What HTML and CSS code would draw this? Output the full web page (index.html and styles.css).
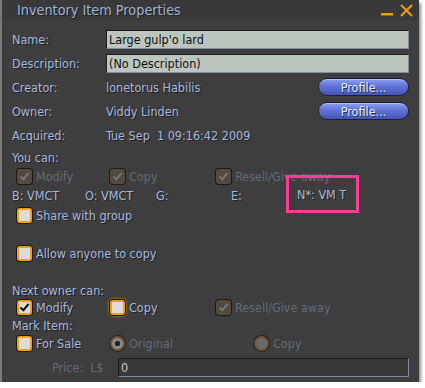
FILE: index.html
```html
<!DOCTYPE html>
<html lang="en">
<head>
  <meta charset="UTF-8">
  <title>Inventory Item Properties</title>
  <link rel="stylesheet" href="styles.css">
</head>
<body>
  <div class="window">
    <div class="titlebar">
      <span class="title">Inventory Item Properties</span>
      <span class="controls">
        <svg class="min" width="12" height="12" viewBox="0 0 12 12"><rect x="0" y="9" width="12" height="2.5" fill="#f5a000"/></svg>
        <svg class="close" width="13" height="13" viewBox="0 0 13 13"><path d="M1 1 L12 12 M12 1 L1 12" stroke="#f5a000" stroke-width="1.8" fill="none"/></svg>
      </span>
    </div>

    <div class="content">
      <div class="row field">
        <span class="label">Name:</span>
        <div class="input">Large gulp'o lard</div>
      </div>
      <div class="row field">
        <span class="label">Description:</span>
        <div class="input">(No Description)</div>
      </div>
      <div class="row field">
        <span class="label">Creator:</span>
        <span class="value">lonetorus Habilis</span>
        <button class="profile">Profile...</button>
      </div>
      <div class="row field">
        <span class="label">Owner:</span>
        <span class="value">Viddy Linden</span>
        <button class="profile">Profile...</button>
      </div>
      <div class="row field">
        <span class="label">Acquired:</span>
        <span class="value">Tue Sep &nbsp;1 09:16:42 2009</span>
      </div>

      <div class="row heading">You can:</div>
      <div class="row checks">
        <label class="check disabled checked col1"><span class="box"></span>Modify</label>
        <label class="check disabled checked col2"><span class="box"></span>Copy</label>
        <label class="check disabled checked col3"><span class="box"></span>Resell/Give away</label>
      </div>
      <div class="row perms">
        <span class="perm p-b">B: VMCT</span>
        <span class="perm p-o">O: VMCT</span>
        <span class="perm p-g">G:</span>
        <span class="perm p-e">E:</span>
        <span class="perm p-n">N*: VM T</span>
      </div>
      <div class="row checks share">
        <label class="check col1"><span class="box"></span>Share with group</label>
      </div>
      <div class="row checks allow">
        <label class="check col1"><span class="box"></span>Allow anyone to copy</label>
      </div>

      <div class="row heading next-owner">Next owner can:</div>
      <div class="row checks">
        <label class="check checked col1"><span class="box"></span>Modify</label>
        <label class="check focus col2"><span class="box"></span>Copy</label>
        <label class="check disabled checked col3"><span class="box"></span>Resell/Give away</label>
      </div>
      <div class="row heading mark">Mark Item:</div>
      <div class="row checks">
        <label class="check col1"><span class="box"></span>For Sale</label>
        <label class="radio disabled selected col2"><span class="dot"></span>Original</label>
        <label class="radio disabled col-r"><span class="dot"></span>Copy</label>
      </div>
      <div class="row price">
        <span class="price-label">Price: &nbsp;L$</span>
        <div class="input dark">0</div>
      </div>
    </div>
  </div>
</body>
</html>
```

FILE: styles.css
```css
body {
  margin: 0;
  background: #fff;
  font-family: 'DejaVu Sans', sans-serif;
  font-stretch: condensed;
  font-size: 12.5px;
  color: #a6b8de;
}
.window {
  width: 419px;
  height: 382px;
  background: #3e3e3e;
  border-left: 2px solid #7a7a7a;
  box-shadow: 2px 3px 3px rgba(0, 0, 0, 0.45);
  box-sizing: border-box;
}
.titlebar {
  height: 20px;
  background: #393939;
  display: flex;
  align-items: center;
  justify-content: space-between;
  padding: 0 6px 0 15px;
}
.title {
  font-size: 14.3px;
  color: #9fb2d6;
  text-shadow: 1px 1px 0 #222;
}
.controls {
  display: flex;
  align-items: center;
  gap: 7px;
}
.content {
  padding: 7px 10px 0 10px;
}
.row {
  display: flex;
  align-items: center;
  white-space: nowrap;
  text-shadow: 1px 1px 0 #222;
}
.field {
  height: 24px;
}
.label {
  width: 94px;
  flex: none;
}
.value {
  flex: 1;
}
.input {
  flex: 1;
  height: 19px;
  box-sizing: border-box;
  background: #bcc6bf;
  color: #111;
  text-shadow: none;
  padding: 1px 2px;
  border-top: 1px solid #1c1c1c;
  border-left: 1px solid #1c1c1c;
  border-right: 1px solid #7d8ea3;
  border-bottom: 1px solid #7d8ea3;
}
.input.dark {
  background: #383838;
  color: #c8c8c8;
}
.profile {
  width: 91px;
  height: 18px;
  border: 1px solid #1e1e28;
  border-radius: 9px;
  background: linear-gradient(#8f9ef0 0%, #6272d8 45%, #4454b4 100%);
  color: #e8e8f4;
  font-family: inherit;
  font-stretch: condensed;
  font-size: 12.5px;
  padding: 0;
  text-shadow: 1px 1px 0 #2a2f55;
  box-shadow: inset 0 1px 0 rgba(255, 255, 255, 0.35);
}
.heading {
  height: 21px;
}
.checks {
  height: 17px;
}
.perms {
  height: 20px;
}
.perm {
  flex: none;
}
.p-b { width: 73px; }
.p-o { width: 71px; }
.p-g { width: 75px; }
.p-e { width: 55px; }
.p-n {
  border: 3px solid #ff3d96;
  padding: 9px 10px 8px 8px;
  margin-top: -2px;
}
.share {
  height: 18px;
  margin-top: 1px;
}
.allow {
  height: 18px;
  margin-top: 20px;
}
.next-owner {
  margin-top: 20px;
  height: 17px;
}
.mark {
  height: 19px;
}
.check,
.radio {
  display: flex;
  align-items: center;
  gap: 4px;
  flex: none;
}
.col1 {
  min-width: 98px;
  padding-left: 5px;
  box-sizing: border-box;
}
.col2 {
  width: 106px;
}
.col-r {
  padding-left: 38px;
}
.box {
  flex: none;
  width: 11px;
  height: 11px;
  border-radius: 3px;
  background: #dcdcdc;
  border: 2px solid #f0a010;
  box-shadow: 0 0 0 1px #1a1a1a;
  position: relative;
}
.check.checked .box::after {
  content: '';
  position: absolute;
  left: 3px;
  top: 0;
  width: 3px;
  height: 7px;
  border: solid #111;
  border-width: 0 2px 2px 0;
  transform: rotate(40deg);
}
.check.focus .box {
  box-shadow: 0 0 0 1px #1a1a1a, 0 0 2px 2px rgba(240, 160, 16, 0.4);
}
.check.disabled {
  color: #616b7a;
  text-shadow: none;
}
.check.disabled .box {
  background: #4b4a47;
  border-color: #5a4a36;
}
.check.disabled .box::after {
  border-color: #7a766e;
}
.radio {
  color: #616b7a;
  text-shadow: none;
}
.dot {
  flex: none;
  width: 11px;
  height: 11px;
  border-radius: 50%;
  background: #6a6a6a;
  border: 2px solid #6e5430;
  box-shadow: 0 0 0 1px #222;
}
.radio.selected .dot {
  background: radial-gradient(circle, #222 0 2.5px, #8a8a8a 3px);
}
.price {
  height: 19px;
  margin-top: 6px;
}
.price-label {
  width: 106px;
  padding-left: 40px;
  box-sizing: border-box;
  color: #616b7a;
  text-shadow: none;
  flex: none;
}
```
